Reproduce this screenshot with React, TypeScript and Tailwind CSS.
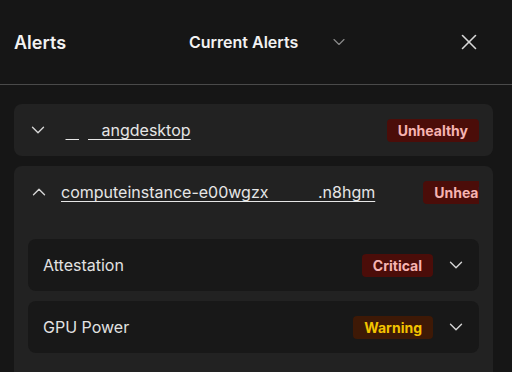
import React from "react";
import { ChevronDown, ChevronUp, X } from "lucide-react";

const font = { fontFamily: "Inter, 'Noto Sans', sans-serif" };

function Badge({ kind, children }: { kind: "red" | "amber"; children: React.ReactNode }) {
  const cls =
    kind === "red"
      ? "bg-[#4b0d09] text-[#f6b4b2]"
      : "bg-[#3e1906] text-[#f3c300]";
  return (
    <span
      className={`shrink-0 inline-flex items-center h-[23px] px-[11px] rounded-[4px] text-[14px] font-bold leading-none ${cls}`}
    >
      {children}
    </span>
  );
}

export default function App() {
  return (
    <div className="w-[512px] h-[372px] overflow-hidden bg-[#161616] text-white" style={font}>
      <div className="h-[85px] flex items-center border-b border-[#4a4a4a] pl-[14px] pr-[30px]">
        <div className="w-[175px] text-[18px] font-semibold text-[#f2f2f2]">Alerts</div>
        <div className="flex items-center">
          <span className="text-[16px] font-semibold text-[#f2f2f2]">Current Alerts</span>
          <ChevronDown className="ml-[31px] text-[#8a8a8a]" size={20} strokeWidth={1.4} />
        </div>
        <X className="ml-auto text-[#d8d8d8]" size={26} strokeWidth={1.5} />
      </div>

      <div className="pl-[14px] pr-[19px] pt-[19px] flex flex-col gap-[10px]">
        <div className="h-[52px] rounded-[8px] bg-[#222222] flex items-center pl-[13px] pr-[14px]">
          <ChevronDown className="shrink-0 text-[#d6d6d6]" size={22} strokeWidth={1.5} />
          <span className="ml-[12px] text-[16px] text-[#e6e6e6] whitespace-pre">
            <span> </span>
            <span className="underline underline-offset-[3px]">{"\u00a0\u00a0\u00a0"}</span>
            <span>{"\u00a0\u00a0"}</span>
            <span className="underline underline-offset-[3px]">{"\u00a0\u00a0\u00a0angdesktop"}</span>
          </span>
          <span className="ml-auto">
            <Badge kind="red">Unhealthy</Badge>
          </span>
        </div>

        <div className="h-[230px] rounded-[8px] bg-[#222222] px-[14px]">
          <div className="h-[52px] flex items-center overflow-hidden">
            <ChevronUp className="shrink-0 text-[#d6d6d6]" size={22} strokeWidth={1.5} />
            <span className="shrink-0 ml-[-3px] pl-[14px] text-[16px] text-[#e6e6e6] whitespace-pre underline underline-offset-[3px]">
              {"computeinstance-e00wgzx\u00a0\u00a0\u00a0\u00a0\u00a0\u00a0\u00a0\u00a0\u00a0\u00a0\u00a0.n8hgm"}
            </span>
            <span className="shrink-0 ml-[48px]">
              <Badge kind="red">Unhealthy</Badge>
            </span>
          </div>

          <div className="mt-[21px] flex flex-col gap-[10px]">
            {[
              { label: "Attestation", badge: "Critical", kind: "red" as const },
              { label: "GPU Power", badge: "Warning", kind: "amber" as const },
            ].map((r) => (
              <div
                key={r.label}
                className="h-[52px] rounded-[8px] bg-[#181818] flex items-center pl-[15px] pr-[12px]"
              >
                <span className="text-[16px] text-[#e2e2e2]">{r.label}</span>
                <span className="ml-auto">
                  <Badge kind={r.kind}>{r.badge}</Badge>
                </span>
                <ChevronDown className="ml-[12px] text-[#d6d6d6]" size={22} strokeWidth={1.5} />
              </div>
            ))}
          </div>
        </div>
      </div>
    </div>
  );
}
